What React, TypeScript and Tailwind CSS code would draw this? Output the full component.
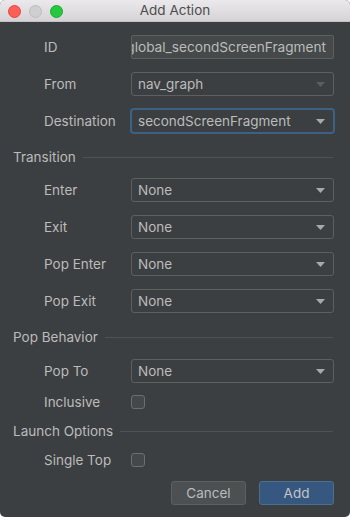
import React from 'react';

const font = { fontFamily: "Inter, 'Liberation Sans', sans-serif" };

const Arrow: React.FC<{ dim?: boolean }> = ({ dim }) => (
  <svg width="9" height="5" viewBox="0 0 9 5" className="shrink-0">
    <path d="M0 0 H9 L4.5 5 Z" fill={dim ? '#5b5e60' : '#a9a9a9'} />
  </svg>
);

const Combo: React.FC<{ value: string; dim?: boolean; focused?: boolean }> = ({ value, dim, focused }) => (
  <div
    className={
      focused
        ? 'w-[203px] h-[24px] flex items-center justify-between pl-[6px] pr-[8px] rounded-[3px] border border-[#3d6185] ring-1 ring-[#3d6185] bg-[#3c3f41]'
        : 'w-[203px] h-[24px] flex items-center justify-between pl-[6px] pr-[8px] rounded-[3px] border border-[#5e6060] bg-[#3c3f41]'
    }
  >
    <span className="text-[13.5px] text-[#bbbbbb] whitespace-nowrap">{value}</span>
    <Arrow dim={dim} />
  </div>
);

const Row: React.FC<{ label: string; className?: string; children: React.ReactNode }> = ({ label, className, children }) => (
  <div className={'flex items-center h-[24px] pl-[44px] ' + (className ?? '')}>
    <span className="w-[87px] text-[13.5px] text-[#bbbbbb] whitespace-nowrap">{label}</span>
    {children}
  </div>
);

const Section: React.FC<{ title: string; className?: string }> = ({ title, className }) => (
  <div className={'flex items-center h-[16px] pl-[13px] pr-[17px] gap-[7px] ' + (className ?? '')}>
    <span className="text-[13.5px] text-[#bbbbbb] whitespace-nowrap">{title}</span>
    <div className="flex-1 h-px bg-[#505354]" />
  </div>
);

const Check = () => (
  <div className="w-[14px] h-[14px] rounded-[3px] border border-[#6b6e6f] bg-[#43494a]" />
);

export default function App() {
  return (
    <div className="w-[350px] h-[517px] bg-white" style={font}>
      <div className="w-full h-full flex flex-col rounded-[5px] overflow-hidden bg-[#3c3f41]">
        {/* title bar */}
        <div className="relative h-[22px] shrink-0 flex items-center justify-center bg-gradient-to-b from-[#ebe9eb] to-[#d5d3d5] border-b border-[#c4c2c4]">
          <div className="absolute left-[8px] top-[5px] flex gap-[8px]">
            <div className="w-[13px] h-[13px] rounded-full bg-[#fd5e56] border border-[#e2463f]" />
            <div className="w-[13px] h-[13px] rounded-full bg-[#d0cfd0] border border-[#bdbcbd]" />
            <div className="w-[13px] h-[13px] rounded-full bg-[#27c840] border border-[#1aab29]" />
          </div>
          <span className="text-[13.5px] text-[#4d4d4d]">Add Action</span>
        </div>

        <Row label="ID" className="mt-[13px]">
          <div className="w-[203px] h-[24px] flex items-center justify-end pr-[7px] overflow-hidden rounded-[2px] border border-[#5e6060] bg-[#45494a]">
            <span className="text-[13.65px] text-[#bbbbbb] whitespace-nowrap">global_secondScreenFragment</span>
          </div>
        </Row>
        <Row label="From" className="mt-[13px]">
          <Combo value="nav_graph" dim />
        </Row>
        <Row label="Destination" className="mt-[13px]">
          <Combo value="secondScreenFragment" focused />
        </Row>

        <Section title="Transition" className="mt-[16px]" />
        <Row label="Enter" className="mt-[13px]">
          <Combo value="None" />
        </Row>
        <Row label="Exit" className="mt-[13px]">
          <Combo value="None" />
        </Row>
        <Row label="Pop Enter" className="mt-[13px]">
          <Combo value="None" />
        </Row>
        <Row label="Pop Exit" className="mt-[13px]">
          <Combo value="None" />
        </Row>

        <Section title="Pop Behavior" className="mt-[16px]" />
        <Row label="Pop To" className="mt-[14px]">
          <Combo value="None" />
        </Row>
        <Row label="Inclusive" className="mt-[7px]">
          <Check />
        </Row>

        <Section title="Launch Options" className="mt-[9px]" />
        <Row label="Single Top" className="mt-[9px]">
          <Check />
        </Row>

        <div className="mt-[9px] flex justify-end gap-[13px] pr-[16px]">
          <button className="w-[75px] h-[24px] rounded-[3px] border border-[#5e6060] bg-[#4c5052] text-[13.5px] text-[#bbbbbb]">
            Cancel
          </button>
          <button className="w-[75px] h-[24px] rounded-[3px] border border-[#4c708c] bg-[#365880] text-[13.5px] text-[#c4c4c4]">
            Add
          </button>
        </div>
      </div>
    </div>
  );
}
